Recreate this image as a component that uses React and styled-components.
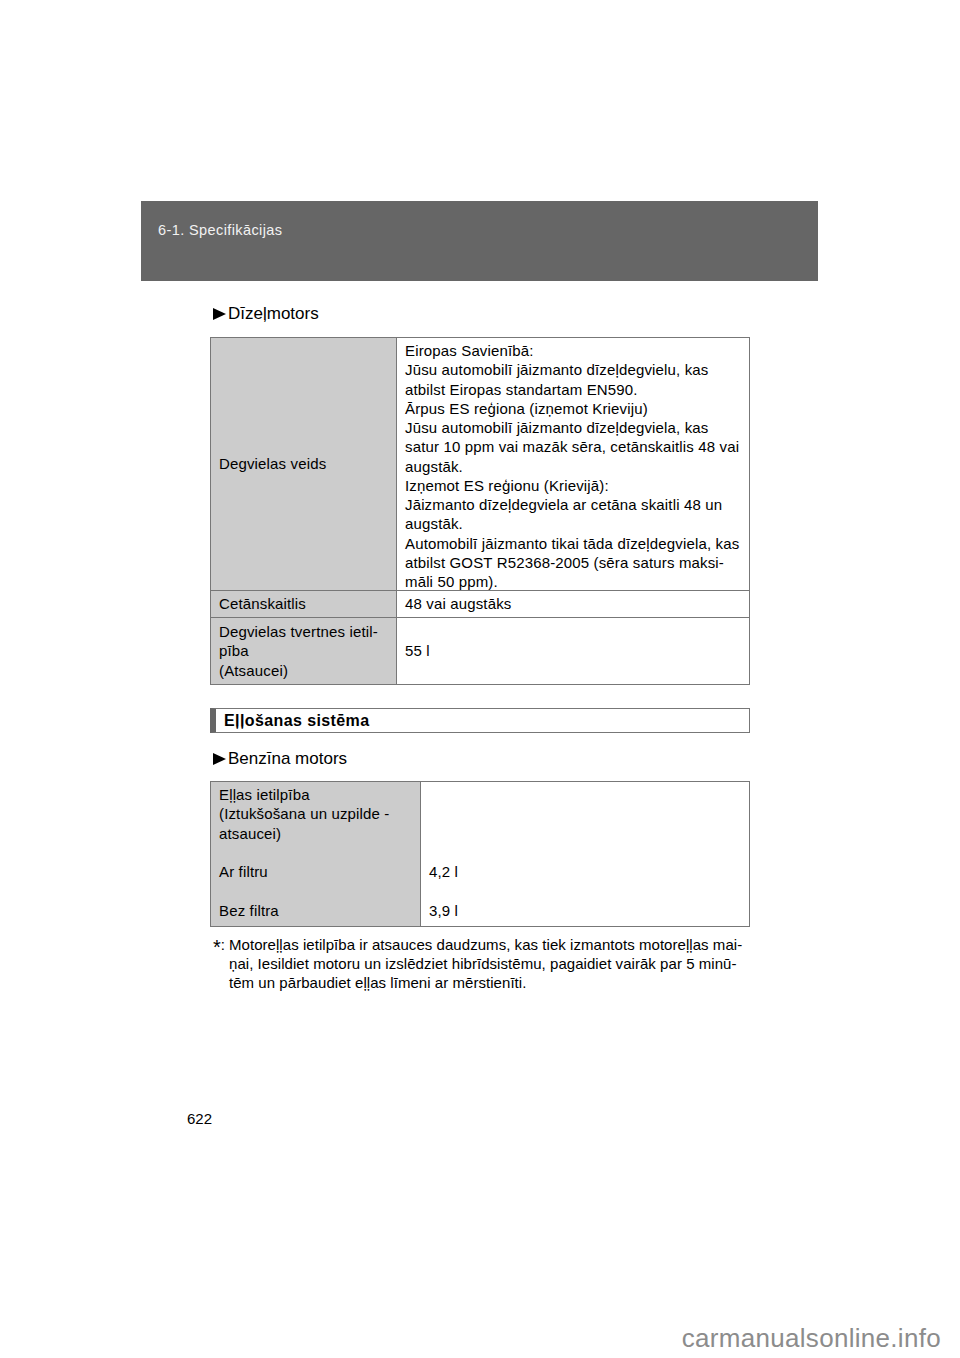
import React from 'react'
import styled, { createGlobalStyle } from 'styled-components'

const GlobalStyle = createGlobalStyle`
  html, body {
    margin: 0;
    padding: 0;
    background: #fff;
  }
  body {
    font-family: "Liberation Sans", Arial, sans-serif;
    color: #000;
  }
`

const Page = styled.div`
  position: relative;
  width: 960px;
  height: 1358px;
  overflow: hidden;
  padding-top: 201px;
  box-sizing: border-box;
`

const HeaderBand = styled.header`
  margin-left: 141px;
  width: 677px;
  height: 80px;
  background: #666666;
  box-sizing: border-box;
  padding: 21px 0 0 17px;
  color: #f2f2f2;
  font-size: 14.5px;
  letter-spacing: 0.4px;
`

const Content = styled.main`
  margin-left: 210px;
  width: 540px;
`

const SubHeading = styled.div`
  display: flex;
  align-items: center;
  gap: 2px;
  margin-left: 3px;
  font-size: 17px;
  height: 20px;
  margin-top: ${({ $top }) => $top}px;
`

const Arrow = styled.span`
  display: inline-block;
  width: 0;
  height: 0;
  border-top: 6px solid transparent;
  border-bottom: 6px solid transparent;
  border-left: 13px solid #000;
`

const Table = styled.div`
  display: grid;
  grid-template-columns: ${({ $left }) => $left}px 1fr;
  border: 1px solid #777;
  border-bottom: none;
  margin-top: ${({ $top }) => $top}px;
  font-size: 15px;
  letter-spacing: 0.15px;
  line-height: 19.25px;
`

const Cell = styled.div`
  position: relative;
  background: ${({ $head }) => ($head ? '#cccccc' : '#ffffff')};
  border-bottom: 1px solid #777;
  border-right: ${({ $head }) => ($head ? '1px solid #777' : 'none')};
  padding: ${({ $pad }) => $pad || '3px 8px'};
  display: flex;
  flex-direction: column;
  justify-content: ${({ $align }) => $align || 'center'};
  min-height: ${({ $h }) => $h || 0}px;
  height: ${({ $fixed }) => ($fixed ? `${$fixed}px` : 'auto')};
  box-sizing: border-box;
`

const Lines = styled.div`
  position: relative;
  z-index: 0;
`

const Gap = styled.div`
  height: ${({ $h }) => $h}px;
`

const SectionBox = styled.div`
  margin-top: 23px;
  height: 25px;
  border: 1px solid #777;
  border-left: 6px solid #666;
  box-sizing: border-box;
  display: flex;
  align-items: center;
  padding-left: 8px;
  font-size: 16px;
  letter-spacing: 0.4px;
  font-weight: bold;
`

const Footnote = styled.div`
  display: flex;
  margin-top: 8px;
  margin-left: 3px;
  font-size: 15px;
  letter-spacing: 0.05px;
  line-height: 19.25px;
`

const Star = styled.span`
  width: 16px;
  flex-shrink: 0;
  sup {
    font-size: 20px;
    line-height: 0;
    vertical-align: -4px;
  }
`

const PageNumber = styled.div`
  margin: 117px 0 0 187px;
  font-size: 15px;
`

const Watermark = styled.div`
  position: absolute;
  right: 19px;
  bottom: 4px;
  font-size: 26px;
  color: #8c8c8c;
  letter-spacing: 0.3px;
`

const dieselLines = [
  'Eiropas Savienībā:',
  'Jūsu automobilī jāizmanto dīzeļdegvielu, kas',
  'atbilst Eiropas standartam EN590.',
  'Ārpus ES reģiona (izņemot Krieviju)',
  'Jūsu automobilī jāizmanto dīzeļdegviela, kas',
  'satur 10 ppm vai mazāk sēra, cetānskaitlis 48 vai',
  'augstāk.',
  'Izņemot ES reģionu (Krievijā):',
  'Jāizmanto dīzeļdegviela ar cetāna skaitli 48 un',
  'augstāk.',
  'Automobilī jāizmanto tikai tāda dīzeļdegviela, kas',
  'atbilst GOST R52368-2005 (sēra saturs maksi-',
  'māli 50 ppm).',
]

const App = () => {
  return (
    <Page>
      <GlobalStyle />
      <HeaderBand>6-1. Specifikācijas</HeaderBand>
      <Content>
        <SubHeading $top={23}>
          <Arrow />
          Dīzeļmotors
        </SubHeading>
        <Table $left={186} $top={13}>
          <Cell $head>Degvielas veids</Cell>
          <Cell $pad="3px 8px 0 8px" $align="flex-start" $fixed={253}>
            <Lines>
              {dieselLines.map((l, i) => (
                <div key={i}>{l}</div>
              ))}
            </Lines>
          </Cell>
          <Cell $head $h={27}>Cetānskaitlis</Cell>
          <Cell $h={27}>48 vai augstāks</Cell>
          <Cell $head $h={67}>
            <div>Degvielas tvertnes ietil-</div>
            <div>pība</div>
            <div>(Atsaucei)</div>
          </Cell>
          <Cell $h={67}>55 l</Cell>
        </Table>

        <SectionBox>Eļļošanas sistēma</SectionBox>

        <SubHeading $top={16}>
          <Arrow />
          Benzīna motors
        </SubHeading>

        <Table $left={210} $top={12}>
          <Cell $head $align="flex-start" $pad="3px 8px 6px 8px">
            <div>Eļļas ietilpība</div>
            <div>(Iztukšošana un uzpilde -</div>
            <div>atsaucei)</div>
            <Gap $h={19.25} />
            <div>Ar filtru</div>
            <Gap $h={19.25} />
            <div>Bez filtra</div>
          </Cell>
          <Cell $align="flex-start" $pad="3px 8px 6px 8px">
            <Gap $h={77} />
            <div>4,2 l</div>
            <Gap $h={19.25} />
            <div>3,9 l</div>
          </Cell>
        </Table>

        <Footnote>
          <Star>
            <sup>*</sup>:
          </Star>
          <div>
            Motoreļļas ietilpība ir atsauces daudzums, kas tiek izmantots motoreļļas mai-
            <br />
            ņai, Iesildiet motoru un izslēdziet hibrīdsistēmu, pagaidiet vairāk par 5 minū-
            <br />
            tēm un pārbaudiet eļļas līmeni ar mērstienīti.
          </div>
        </Footnote>
      </Content>
      <PageNumber>622</PageNumber>
      <Watermark>carmanualsonline.info</Watermark>
    </Page>
  )
}

export default App
